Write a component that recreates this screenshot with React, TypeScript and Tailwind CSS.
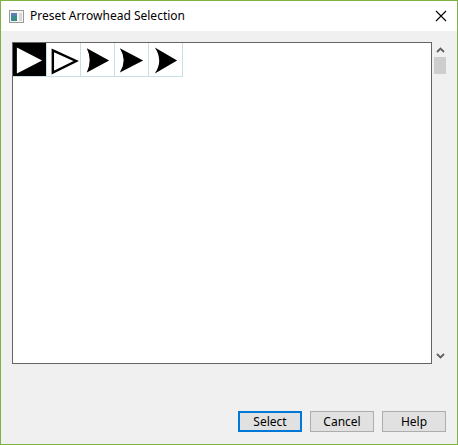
import React from "react";

const Cell = ({ selected, children }: { selected?: boolean; children: React.ReactNode }) => (
  <div
    className={
      "w-[34px] h-[34px] border-r border-b border-[#c8dfe6] flex items-center justify-center " +
      (selected ? "bg-black" : "bg-white")
    }
  >
    <svg width="34" height="34" viewBox="0 0 34 34">
      {children}
    </svg>
  </div>
);

const Btn = ({ label, primary }: { label: string; primary?: boolean }) => (
  <button
    className={
      "w-[64px] h-[21px] bg-[#e1e1e1] text-[12px] text-black leading-none flex items-center justify-center " +
      (primary ? "border-2 border-[#0078d7]" : "border border-[#adadad]")
    }
  >
    {label}
  </button>
);

export default function App() {
  return (
    <div
      className="w-[458px] h-[445px] border border-[#7cb342] bg-[#f0f0f0] flex flex-col"
      style={{ fontFamily: '"Noto Sans", "Liberation Sans", sans-serif' }}
    >
      <div className="h-[30px] bg-white flex items-center pl-[8px] pr-[10px]">
        <svg width="15" height="13" viewBox="0 0 15 13">
          <rect x="0.5" y="0.5" width="14" height="12" fill="#f4f4f4" stroke="#9a9a9a" />
          <rect x="2" y="3" width="6" height="8" fill="#3c8c8c" />
          <rect x="2" y="3" width="6" height="3" fill="#5a7fb0" />
          <rect x="10" y="3" width="3" height="8" fill="#d8d8d8" />
        </svg>
        <span className="ml-[6px] text-[12px] text-black">Preset Arrowhead Selection</span>
        <svg className="ml-auto" width="12" height="12" viewBox="0 0 12 12">
          <path d="M1 1 L11 11 M11 1 L1 11" stroke="#000" strokeWidth="1.1" />
        </svg>
      </div>
      <div className="flex pl-[11px] pt-[11px]">
        <div className="w-[420px] h-[322px] border border-[#646464] bg-white">
          <div className="flex">
            <Cell selected>
              <polygon points="4,4 30,17.5 4,31" fill="#fff" />
            </Cell>
            <Cell>
              <polygon points="6,7 30,18 6,30" fill="#fff" stroke="#000" strokeWidth="2.5" strokeLinejoin="miter" />
            </Cell>
            <Cell>
              <path d="M6,5 L29,17.5 L6,30 Q12,17.5 6,5 Z" fill="#000" />
            </Cell>
            <Cell>
              <path d="M5,5 L29,17.5 L5,30 Q13,17.5 5,5 Z" fill="#000" />
            </Cell>
            <Cell>
              <path d="M6,4 L29,17.5 L6,31 Q15,17.5 6,4 Z" fill="#000" />
            </Cell>
          </div>
        </div>
        <div className="w-[16px] h-[322px] flex flex-col items-center">
          <svg className="mt-[5px]" width="9" height="6" viewBox="0 0 9 6">
            <path d="M1 5 L4.5 1.5 L8 5" stroke="#606060" strokeWidth="1.8" fill="none" />
          </svg>
          <div className="mt-[4px] w-[12px] h-[17px] bg-[#cdcdcd]" />
          <svg className="mt-auto mb-[5px]" width="9" height="6" viewBox="0 0 9 6">
            <path d="M1 1 L4.5 4.5 L8 1" stroke="#606060" strokeWidth="1.8" fill="none" />
          </svg>
        </div>
      </div>
      <div className="flex justify-end gap-[8px] pr-[11px] mt-[47px]">
        <Btn label="Select" primary />
        <Btn label="Cancel" />
        <Btn label="Help" />
      </div>
    </div>
  );
}
